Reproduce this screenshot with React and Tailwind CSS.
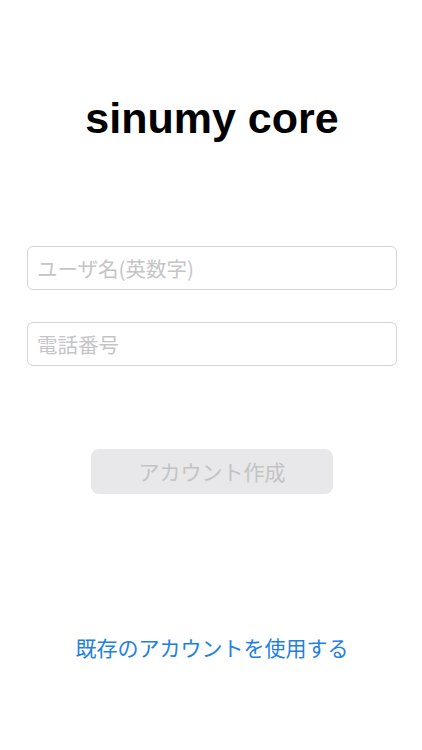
export default function App() {
  const jp = { fontFamily: '"Noto Sans CJK JP", "Noto Sans", sans-serif' };
  return (
    <div className="w-[422px] h-[750px] bg-white flex flex-col items-center overflow-hidden pl-[2px]">
      <h1
        className="mt-[97px] h-[42px] leading-[42px] text-[43px] font-bold text-black"
        style={{ fontFamily: '"Liberation Sans", Arial, sans-serif' }}
      >
        sinumy core
      </h1>
      <div className="mt-[107px] w-[370px] h-[44px] border border-[#d4d4d6] rounded-[6px] flex items-center pl-[9px]">
        <span className="text-[20.5px] text-[#c5c5c7] leading-none" style={jp}>ユーザ名(英数字)</span>
      </div>
      <div className="mt-[32px] w-[370px] h-[44px] border border-[#d4d4d6] rounded-[6px] flex items-center pl-[9px]">
        <span className="text-[20.5px] text-[#c5c5c7] leading-none" style={jp}>電話番号</span>
      </div>
      <div className="mt-[83px] w-[242px] h-[45px] bg-[#e8e8ea] rounded-[8px] flex items-center justify-center">
        <span className="text-[21px] text-[#c3c3c5] leading-none" style={jp}>アカウント作成</span>
      </div>
      <div className="mt-[141px] h-[24px] flex items-center">
        <span className="text-[21px] text-[#1f80e2] leading-none" style={jp}>既存のアカウントを使用する</span>
      </div>
    </div>
  );
}
